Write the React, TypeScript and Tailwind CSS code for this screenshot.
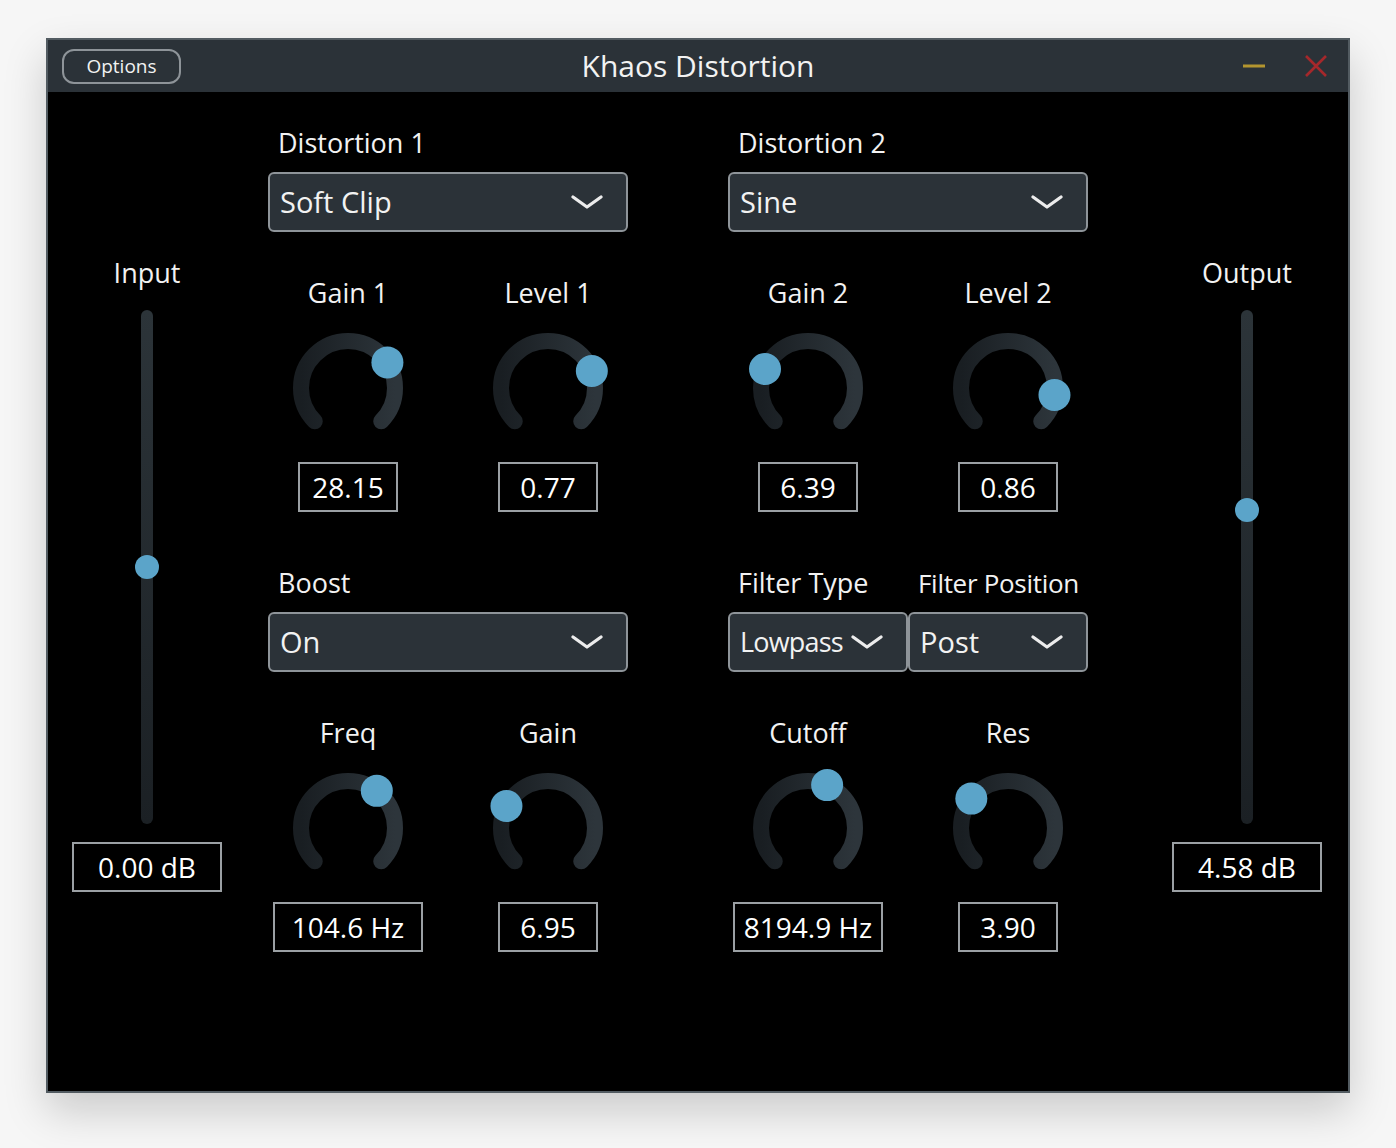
import React from 'react';

const FONT = { fontFamily: '"Open Sans", "Noto Sans", sans-serif' };

function polar(cx: number, cy: number, r: number, deg: number) {
  const a = (deg * Math.PI) / 180;
  return { x: cx + r * Math.sin(a), y: cy - r * Math.cos(a) };
}

function Knob({ label, value, t, boxW = 'w-[100px]', id }: { label: string; value: string; t: number; boxW?: string; id: string }) {
  const start = polar(60, 60, 47, -135);
  const end = polar(60, 60, 47, 135);
  const thumb = polar(60, 60, 47, -135 + 270 * t);
  return (
    <div className="flex w-[160px] flex-col items-center">
      <div className="flex h-[36px] items-center text-[27px] font-medium text-[#f2f2f2]">{label}</div>
      <svg width="120" height="120" viewBox="0 0 120 120" className="mt-[17px] overflow-visible">
        <defs>
          <linearGradient id={id} x1="0" y1="0" x2="1" y2="0">
            <stop offset="0" stopColor="#191e22" />
            <stop offset="1" stopColor="#2d353b" />
          </linearGradient>
        </defs>
        <path
          d={`M ${start.x} ${start.y} A 47 47 0 1 1 ${end.x} ${end.y}`}
          fill="none"
          stroke={`url(#${id})`}
          strokeWidth="16"
          strokeLinecap="round"
        />
        <circle cx={thumb.x} cy={thumb.y} r="16" fill="#5ba4c9" />
      </svg>
      <div className={`mt-[14px] flex h-[50px] ${boxW} items-center justify-center border-2 border-[#9ba0a4] text-[28px] text-white`}>
        {value}
      </div>
    </div>
  );
}

function Chevron() {
  return (
    <svg width="32" height="14" viewBox="0 0 32 14" className="shrink-0">
      <path d="M2 2 L16 12 L30 2" fill="none" stroke="#ececec" strokeWidth="3.2" strokeLinecap="round" strokeLinejoin="round" />
    </svg>
  );
}

function Dropdown({ text, w = 'w-[360px]', tight = false }: { text: string; w?: string; tight?: boolean }) {
  return (
    <div className={`flex h-[60px] ${w} items-center justify-between rounded-[6px] border-2 border-[#8e9499] bg-[#2b3238] pl-[10px] pr-[23px] text-[#f2f2f2]`}>
      <span className={tight ? 'text-[27px] tracking-[-0.8px]' : 'text-[29px]'}>{text}</span>
      <Chevron />
    </div>
  );
}

function SectionLabel({ children, w }: { children: React.ReactNode; w?: string }) {
  return <div className={`flex h-[36px] items-center pl-[10px] text-[27px] font-medium text-[#f2f2f2] ${w ?? ''}`}>{children}</div>;
}

function Slider({ label, value, t }: { label: string; value: string; t: number }) {
  const top = 12 + (1 - t) * 490;
  return (
    <div className="flex w-[150px] flex-col items-center">
      <div className="mt-[163px] flex h-[36px] items-center text-[27px] font-medium text-[#f2f2f2]">{label}</div>
      <div className="relative mt-[19px] h-[514px] w-[12px] rounded-full bg-gradient-to-b from-[#2c3439] to-[#1b2024]">
        <div className="absolute left-[-6px] h-[24px] w-[24px] rounded-full bg-[#5ba4c9]" style={{ top: top - 12 }} />
      </div>
      <div className="mt-[18px] flex h-[50px] w-[150px] items-center justify-center border-2 border-[#9ba0a4] text-[28px] text-white">
        {value}
      </div>
    </div>
  );
}

export default function App() {
  return (
    <div className="min-h-[1148px] w-[1396px] bg-[#f6f6f6] pl-[46px] pt-[38px]" style={FONT}>
      <div className="flex h-[1055px] w-[1304px] flex-col border-2 border-[#525b61] bg-black shadow-[0_18px_40px_rgba(0,0,0,0.18)]">
        {/* Title bar */}
        <div className="grid h-[52px] grid-cols-[1fr_auto_1fr] items-center bg-[#2b3238] px-[14px]">
          <div>
            <div className="flex h-[35px] w-[119px] items-center justify-center rounded-[12px] border-2 border-[#8e9499] text-[19px] font-medium text-[#f2f2f2]">
              Options
            </div>
          </div>
          <div className="pb-[2px] text-[30px] font-medium text-[#f2f2f2]">Khaos Distortion</div>
          <div className="flex items-center justify-end gap-[38px] pr-[6px]">
            <svg width="24" height="24" viewBox="0 0 24 24">
              <rect x="1" y="10.5" width="22" height="3" fill="#b3952f" />
            </svg>
            <svg width="24" height="24" viewBox="0 0 24 24">
              <path d="M2 2 L22 22 M22 2 L2 22" stroke="#a5282b" strokeWidth="2.6" />
            </svg>
          </div>
        </div>

        {/* Content */}
        <div className="flex flex-1">
          <div className="ml-[24px]">
            <Slider label="Input" value="0.00 dB" t={0.5} />
          </div>

          <div className="ml-[46px] flex w-[360px] flex-col">
            <div className="mt-[33px]"><SectionLabel>Distortion 1</SectionLabel></div>
            <div className="mt-[11px]"><Dropdown text="Soft Clip" /></div>
            <div className="mt-[43px] flex justify-between">
              <Knob id="g1" label="Gain 1" value="28.15" t={0.711} />
              <Knob id="l1" label="Level 1" value="0.77" t={0.755} />
            </div>
            <div className="mt-[53px]"><SectionLabel>Boost</SectionLabel></div>
            <div className="mt-[11px]"><Dropdown text="On" /></div>
            <div className="mt-[43px] flex justify-between">
              <Knob id="fq" label="Freq" value="104.6 Hz" t={0.64} boxW="w-[150px]" />
              <Knob id="bg" label="Gain" value="6.95" t={0.27} />
            </div>
          </div>

          <div className="ml-[100px] flex w-[360px] flex-col">
            <div className="mt-[33px]"><SectionLabel>Distortion 2</SectionLabel></div>
            <div className="mt-[11px]"><Dropdown text="Sine" /></div>
            <div className="mt-[43px] flex justify-between">
              <Knob id="g2" label="Gain 2" value="6.39" t={0.255} />
              <Knob id="l2" label="Level 2" value="0.86" t={0.865} />
            </div>
            <div className="mt-[53px] flex">
              <SectionLabel w="w-[180px]">Filter Type</SectionLabel>
              <div className="flex h-[36px] w-[180px] items-center whitespace-nowrap pl-[10px] text-[26px] font-medium tracking-[-0.3px] text-[#f2f2f2]">
                Filter Position
              </div>
            </div>
            <div className="mt-[11px] flex">
              <Dropdown text="Lowpass" w="w-[180px]" tight />
              <Dropdown text="Post" w="w-[180px]" />
            </div>
            <div className="mt-[43px] flex justify-between">
              <Knob id="co" label="Cutoff" value="8194.9 Hz" t={0.589} boxW="w-[150px]" />
              <Knob id="rs" label="Res" value="3.90" t={0.31} />
            </div>
          </div>

          <div className="ml-[84px]">
            <Slider label="Output" value="4.58 dB" t={0.616} />
          </div>
        </div>
      </div>
    </div>
  );
}
